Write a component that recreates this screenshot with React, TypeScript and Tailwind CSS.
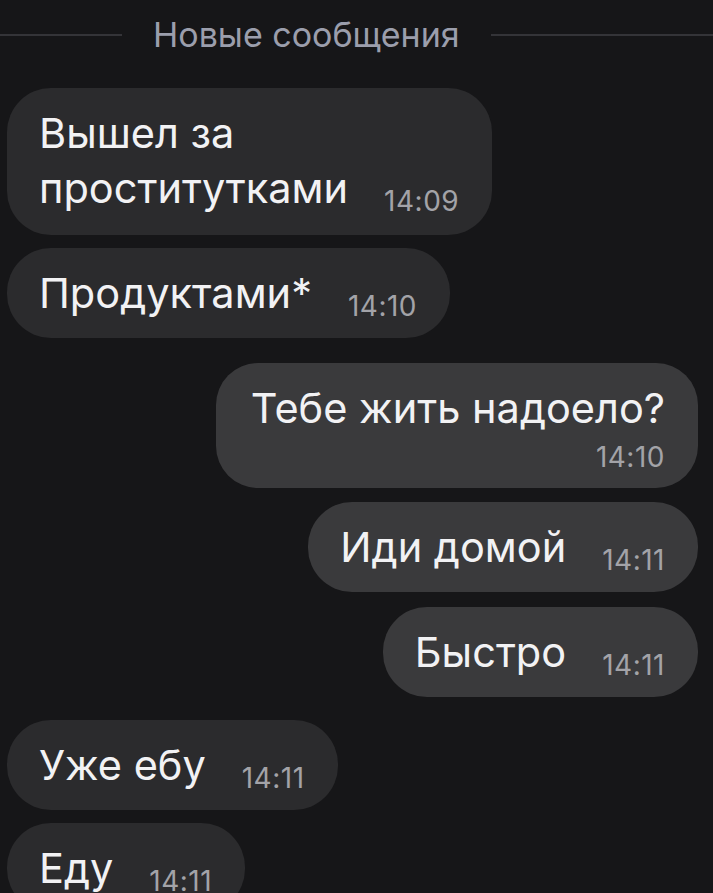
import type { ReactNode } from 'react';

type Side = 'in' | 'out';

interface BubbleProps {
  side: Side;
  time: string;
  className?: string;
  children: ReactNode;
  timeBelow?: boolean;
}

const font = { fontFamily: 'Inter, "Noto Sans", sans-serif' };

function Bubble({ side, time, className = '', children, timeBelow = false }: BubbleProps) {
  const tone = side === 'in' ? 'bg-[#2b2b2d] self-start ml-[7px]' : 'bg-[#3a3a3c] self-end mr-[15px]';

  if (timeBelow) {
    return (
      <div className={`${tone} ${className} rounded-[42px] pl-[35px] pr-[33px] pt-[18px] pb-[16px]`}>
        <div className="text-[41.5px] leading-[55px] text-[#f2f2f4]">{children}</div>
        <div className="mt-[6px] text-right text-[28px] tracking-[0.5px] leading-[30px] text-[#a3a3a8]">
          {time}
        </div>
      </div>
    );
  }

  return (
    <div className={`${tone} ${className} rounded-[44px] pl-[32px] pr-[33px] pt-[18px]`}>
      <div className="text-[41.5px] leading-[55px] text-[#f2f2f4]">
        {children}
        <span className="ml-[36px] inline-block align-[-8px] text-[28px] tracking-[0.5px] leading-[20px] text-[#a3a3a8]">
          {time}
        </span>
      </div>
    </div>
  );
}

export default function App() {
  return (
    <div
      className="w-[713px] h-[893px] overflow-hidden bg-[#161618] flex flex-col antialiased"
      style={font}
    >
      <div className="h-[70px] flex items-center shrink-0">
        <div className="w-[122px] h-[2px] bg-[#343438]" />
        <span className="mx-[31px] text-[34px] leading-none text-[#9b9eac]">Новые сообщения</span>
        <div className="flex-1 h-[2px] bg-[#343438]" />
      </div>

      <div className="flex flex-col">
        <Bubble side="in" time="14:09" className="mt-[18px] pb-[19px]">
          Вышел за
          <br />
          проститутками
        </Bubble>
        <Bubble side="in" time="14:10" className="mt-[13px] pb-[17px]">
          Продуктами*
        </Bubble>
        <Bubble side="out" time="14:10" className="mt-[25px]" timeBelow>
          Тебе жить надоело?
        </Bubble>
        <Bubble side="out" time="14:11" className="mt-[14px] pb-[17px]">
          Иди домой
        </Bubble>
        <Bubble side="out" time="14:11" className="mt-[15px] pb-[17px]">
          Быстро
        </Bubble>
        <Bubble side="in" time="14:11" className="mt-[23px] pb-[17px]">
          Уже ебу
        </Bubble>
        <Bubble side="in" time="14:11" className="mt-[13px] pb-[17px]">
          Еду
        </Bubble>
      </div>
    </div>
  );
}
